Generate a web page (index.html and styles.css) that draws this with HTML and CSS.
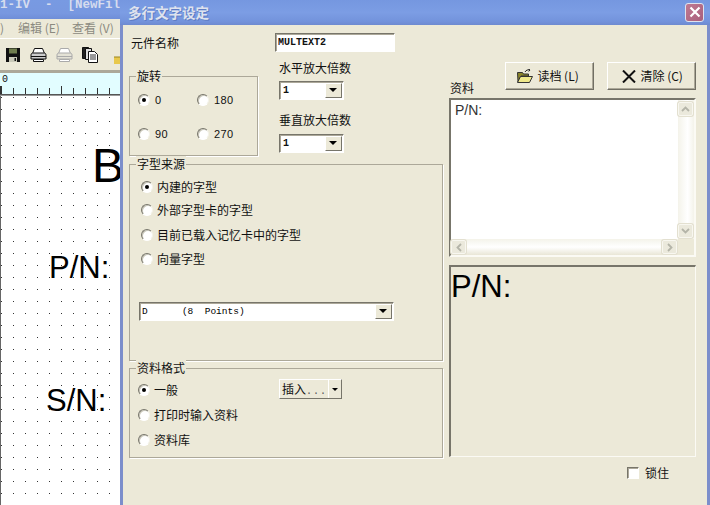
FILE: index.html
```html
<!DOCTYPE html>
<html lang="zh">
<head>
<meta charset="utf-8">
<title>多行文字设定</title>
<link rel="stylesheet" href="styles.css">
</head>
<body>
<div class="desktop">
  <div class="app">
    <div class="app-title">1-IV  -  [NewFil</div>
    <div class="app-menu"><span class="m1">)</span><span class="m2">编辑 (E)</span><span class="m3">查看 (V)</span></div>
    <div class="app-tools">
      <svg class="tool" width="16" height="16" viewBox="0 0 16 16"><path d="M1 1h14v14H1z" fill="#111"/><path d="M4 1.500h8v5H4z" fill="#6f7d4e"/><path d="M4 10h8v5H4z" fill="#c9c9b8"/><path d="M9.500 11h1.500v3H9.500z" fill="#111"/></svg>
      <svg class="tool" width="17" height="16" viewBox="0 0 17 16"><path d="M4.500 1.500h8l2 5h-12z" fill="#fff" stroke="#111"/><path d="M1 8c0-1.500 1-2 2-2h11c1 0 2 .5 2 2v4H1z" fill="#ccc" stroke="#111"/><path d="M1 9.500h15M3.500 12.500h10v2h-10z" fill="#fff" stroke="#111"/></svg>
      <svg class="tool" width="17" height="16" viewBox="0 0 17 16"><path d="M4.500 1.500h8l2 5h-12z" fill="#fff" stroke="#aaa"/><path d="M1 8c0-1.500 1-2 2-2h11c1 0 2 .5 2 2v4H1z" fill="#e4e2d6" stroke="#aaa"/><path d="M1 9.500h15M3.500 12.500h10v2h-10z" fill="#fff" stroke="#aaa"/></svg>
      <svg class="tool" width="16" height="16" viewBox="0 0 16 16"><path d="M.5.500h6l1 1v10h-7z" fill="#222" stroke="#111"/><path d="M3.500 1.500h6v11h-6z" fill="#ddd" stroke="#111"/><path d="M6.500 4.500h6l3 3v8h-9z" fill="#fff" stroke="#111"/><path d="M8 8h6M8 10h6M8 12h6" stroke="#333"/></svg>
      <svg class="tool-folder" width="12" height="8" viewBox="0 0 12 8"><path d="M0 1h12v7H0z" fill="#e8c84c"/><path d="M0 1h12" stroke="#9a8420"/><path d="M8 0h4v1H8z" fill="#333"/></svg>
    </div>
    <div class="ruler"><span class="ruler-zero">0</span></div>
    <div class="canvas">
      <span class="big-b">B</span>
      <span class="big-pn">P/N:</span>
      <span class="big-sn">S/N:</span>
    </div>
  </div>

  <section class="dialog">
    <header class="dlg-title">
      <h1>多行文字设定</h1>
      <button class="close" aria-label="关闭"><svg width="12" height="12" viewBox="0 0 12 12"><path d="M1.500 1.500l9 9M10.500 1.500l-9 9" stroke="#fff" stroke-width="2.200"/></svg></button>
    </header>
    <div class="dlg-body">
      <div class="col-left">
        <div class="name-row">
          <label class="name-label">元件名称</label>
          <div class="field name-field mono">MULTEXT2</div>
        </div>
        <div class="rot-row">
          <div class="group rot-group">
            <span class="legend">旋转</span>
            <div class="rot-grid">
              <div class="opt"><i class="radio on"></i><span>0</span></div>
              <div class="opt"><i class="radio"></i><span>180</span></div>
              <div class="opt"><i class="radio"></i><span>90</span></div>
              <div class="opt"><i class="radio"></i><span>270</span></div>
            </div>
          </div>
          <div class="scale-col">
            <label class="scale-label first">水平放大倍数</label>
            <div class="field combo small mono"><span class="combo-val">1</span><i class="arrow"></i></div>
            <label class="scale-label second">垂直放大倍数</label>
            <div class="field combo small mono"><span class="combo-val">1</span><i class="arrow"></i></div>
          </div>
        </div>
        <div class="group src-group">
          <span class="legend">字型来源</span>
          <div class="src-list">
            <div class="opt"><i class="radio on"></i><span>内建的字型</span></div>
            <div class="opt"><i class="radio"></i><span>外部字型卡的字型</span></div>
            <div class="opt"><i class="radio"></i><span>目前已载入记忆卡中的字型</span></div>
            <div class="opt"><i class="radio"></i><span>向量字型</span></div>
          </div>
          <div class="field combo wide mono"><span class="combo-val">D      (8  Points)</span><i class="arrow"></i></div>
        </div>
        <div class="group fmt-group">
          <span class="legend">资料格式</span>
          <div class="fmt-list">
            <div class="opt"><i class="radio on"></i><span>一般</span></div>
            <div class="opt"><i class="radio"></i><span>打印时输入资料</span></div>
            <div class="opt"><i class="radio"></i><span>资料库</span></div>
          </div>
          <div class="split"><span class="split-main">插入<span class="mono">...</span></span><span class="split-arrow"><i class="arrow-sm"></i></span></div>
        </div>
      </div>
      <div class="col-right">
        <div class="btn-row">
          <label class="data-label">资料</label>
          <button class="btn load">
            <svg width="16" height="14" viewBox="0 0 16 14"><path d="M.5 3.500h5l1 1.500h5v2H4l-3 6z" fill="#8a8428" stroke="#333"/><path d="M3.500 7.500h12l-3 6H.5z" fill="#efe88a" stroke="#333"/><path d="M8 3c1-2 3-2.500 5-2M13 1l-1.800-1M13 1l-1.300 1.500" fill="none" stroke="#222"/></svg>
            <span>读档 (L)</span>
          </button>
          <button class="btn clear">
            <svg width="14" height="13" viewBox="0 0 14 13"><path d="M1 .5l12 12M13 .5l-12 12" stroke="#111" stroke-width="2"/></svg>
            <span>清除 (C)</span>
          </button>
        </div>
        <div class="memo">
          <div class="memo-text">P/N:</div>
          <div class="vbar"><i class="sb-btn"><svg width="9" height="6" viewBox="0 0 9 6"><path d="M1 5l3.500-3.500L8 5" fill="none" stroke="#b4b4a8" stroke-width="1.800"/></svg></i><i class="sb-btn"><svg width="9" height="6" viewBox="0 0 9 6"><path d="M1 1l3.500 3.500L8 1" fill="none" stroke="#b4b4a8" stroke-width="1.800"/></svg></i></div>
          <div class="hbar"><i class="sb-btn"><svg width="6" height="9" viewBox="0 0 6 9"><path d="M5 1L1.500 4.500 5 8" fill="none" stroke="#b4b4a8" stroke-width="1.800"/></svg></i><i class="sb-btn"><svg width="6" height="9" viewBox="0 0 6 9"><path d="M1 1l3.500 3.500L1 8" fill="none" stroke="#b4b4a8" stroke-width="1.800"/></svg></i></div>
        </div>
        <div class="preview">P/N:</div>
        <div class="lock-row"><i class="check"></i><span>锁住</span></div>
      </div>
    </div>
  </section>
</div>
</body>
</html>
```

FILE: styles.css
```css
* { box-sizing: border-box; }
html, body { margin: 0; padding: 0; }
body {
  width: 710px;
  height: 505px;
  overflow: hidden;
  font: 12px/16px "Noto Sans CJK SC", "Liberation Sans", sans-serif;
  color: #111;
  background: #ece9d8;
}
.desktop { position: relative; width: 710px; height: 505px; overflow: hidden; }
i { display: block; font-style: normal; }
.mono { font-family: "Liberation Mono", "DejaVu Sans Mono", monospace; }

/* background application */
.app { width: 121px; height: 505px; display: flex; flex-direction: column; overflow: hidden; background: #ece9d8; }
.app-title {
  height: 19px; flex: none; white-space: pre; overflow: hidden;
  font: bold 12.500px/11px "Liberation Mono", monospace; color: #d6dcee;
  background: linear-gradient(#789ae2, #7898e0 70%, #6f8ed8);
}
.app-menu { height: 20px; flex: none; display: flex; align-items: center; padding-bottom: 2px; color: #8b8a80; border-bottom: 1px solid #fff; }
.app-menu span { white-space: nowrap; }
.m1 { width: 18px; }
.m2 { width: 54px; }
.app-tools { height: 34px; flex: none; display: flex; align-items: flex-start; padding: 8px 0 0 5px; border-bottom: 3px solid #aca899; }
.tool { flex: none; margin-right: 9px; }
.tool-folder { flex: none; margin: 9px 0 0 7px; }
.ruler {
  height: 23px; flex: none; position: relative; background-color: #e2fdff;
  background-image:
    linear-gradient(#555, #555),
    repeating-linear-gradient(90deg, #333 0 1px, transparent 1px 12px),
    repeating-linear-gradient(90deg, #333 0 1px, transparent 1px 60px);
  background-repeat: no-repeat, repeat-x, repeat-x;
  background-size: 100% 1px, 100% 6px, 100% 8px;
  background-position: 0 21px, 1px 15px, 1px 13px;
  border-bottom: 1px solid #999;
}
.ruler-zero { position: absolute; left: 2px; top: 1px; font: 10px/12px "Liberation Mono", monospace; color: #111; }
.canvas {
  flex: 1; position: relative; overflow: hidden; background-color: #fff;
  border-left: 1px solid #666;
  background-image: radial-gradient(circle at .5px .5px, #333 .7px, transparent .8px);
  background-size: 12px 12px;
  background-position: 0 1px;
}
.canvas span { position: absolute; font-family: "Liberation Sans", sans-serif; color: #000; white-space: nowrap; }
.big-b { left: 91px; top: 42px; font-size: 48px; line-height: 56px; }
.big-pn { left: 48px; top: 152px; font-size: 31px; line-height: 40px; }
.big-sn { left: 45px; top: 285px; font-size: 31px; line-height: 40px; }

/* dialog */
.dialog {
  position: absolute; left: 120px; top: 0; width: 590px; height: 505px;
  display: flex; flex-direction: column;
  border-left: 3px solid #7c8ecb; border-right: 3px solid #7c8ecb;
  background: #ece9d8;
}
.dlg-title {
  height: 25px; flex: none; display: flex; align-items: center; justify-content: space-between;
  margin: 0 -3px; padding: 0 6px 1px 8px;
  background: linear-gradient(#7597e0, #7c9de4 50%, #7393dc 85%, #6e8ad0);
}
.dlg-title h1 { margin: 0; font-size: 13.500px; font-weight: bold; line-height: 16px; color: #dfe3ee; text-shadow: 1px 1px 0 #5f7cc4; }
.close {
  width: 19px; height: 19px; padding: 0; display: flex; align-items: center; justify-content: center;
  border: 1px solid #dfe3ee; border-radius: 3px;
  background: linear-gradient(135deg, #bf7a92, #a95f7c);
}
.dlg-body { flex: 1; display: flex; padding: 0 0 0 6px; gap: 6px; }
.col-left { width: 314px; flex: none; display: flex; flex-direction: column; }
.col-right { width: 247px; flex: none; display: flex; flex-direction: column; }

.name-row { display: flex; align-items: center; margin-top: 8px; height: 19px; }
.name-label { width: 146px; padding-left: 2px; }

.field {
  background: #fff; border: 1px solid; border-color: #77756a #fff #fff #77756a;
  box-shadow: inset 1px 1px 0 #aca899;
  font-size: 10px; font-weight: bold; color: #111;
}
.name-field { width: 120px; height: 19px; line-height: 16px; padding: 1px 0 0 2px; }

.group { position: relative; border: 1px solid #aca899; box-shadow: 1px 1px 0 #fff; }
.legend { position: absolute; left: 6px; top: -9px; padding: 0 1px; background: #ece9d8; line-height: 16px; }

.opt { display: flex; align-items: center; height: 16px; white-space: nowrap; }
.radio {
  width: 12px; height: 12px; flex: none; border-radius: 50%; position: relative; background: #fff;
  border: 1px solid; border-color: #77756a #f4f3ea #fff #77756a;
  box-shadow: inset 1px 1px 0 #c8c6b8;
}
.radio.on::after { content: ""; position: absolute; left: 3px; top: 3px; width: 4px; height: 4px; border-radius: 50%; background: #000; }

.rot-row { display: flex; }
.rot-group { width: 129px; height: 80px; margin-top: 24px; flex: none; }
.rot-grid { display: grid; grid-template-columns: 59px 1fr; grid-auto-rows: 16px; row-gap: 18px; padding: 15px 0 0 8px; }
.rot-grid .opt { gap: 5px; font-family: "Liberation Sans", sans-serif; font-size: 11px; letter-spacing: .4px; }
.scale-col { margin-left: 21px; display: flex; flex-direction: column; align-items: flex-start; }
.scale-label { display: block; line-height: 16px; }
.scale-label.first { margin-top: 8px; margin-bottom: 5px; }
.scale-label.second { margin-top: 12px; margin-bottom: 6px; }

.combo { display: flex; align-items: center; justify-content: space-between; height: 19px; padding: 1px; line-height: 15px; }
.combo-val { padding-left: 2px; white-space: pre; }
.small { width: 65px; }
.arrow {
  width: 17px; height: 15px; flex: none; position: relative; background: #ece9d8;
  border: 1px solid; border-color: #fff #77756a #77756a #fff;
}
.arrow::after { content: ""; position: absolute; left: 3px; top: 4px; border: 4px solid transparent; border-top: 4px solid #000; border-bottom: 0; }

.src-group { height: 197px; margin-top: 8px; }
.src-list { display: grid; grid-template-rows: 23px 25px 24px 16px; padding: 14px 0 0 11px; }
.src-list .opt { gap: 4px; }
.wide { width: 255px; height: 19px; margin: 35px 0 0 9px; font-size: 9.500px; font-weight: normal; color: #000; }
.wide .combo-val { padding-left: 1px; }

.fmt-group { height: 90px; margin-top: 7px; display: flex; }
.fmt-list { width: 149px; flex: none; display: grid; grid-template-rows: 25px 25px 16px; padding: 13px 0 0 8px; }
.fmt-list .opt { gap: 4px; }
.split {
  display: flex; align-items: stretch; width: 63px; height: 20px; margin-top: 10px;
  background: #ece9d8; border: 1px solid; border-color: #fff #77756a #77756a #fff;
}
.split-main { flex: 1; padding: 0 0 0 2px; line-height: 17px; border-right: 1px solid #fff; white-space: nowrap; }
.split-main .mono { font-size: 10px; letter-spacing: 1px; color: #555; }
.split-arrow { width: 12px; flex: none; display: flex; align-items: center; justify-content: center; }
.arrow-sm { border: 3px solid transparent; border-top: 3px solid #000; border-bottom: 0; }

.btn-row { display: flex; margin-top: 37px; height: 28px; }
.data-label { width: 56px; padding-left: 1px; align-self: flex-end; margin-bottom: -6px; }
.btn {
  height: 28px; margin: 0; display: flex; align-items: center; justify-content: center; gap: 4px;
  background: #ece9d8; font: inherit; color: #111;
  border: 1px solid; border-color: #fff #716f64 #716f64 #fff;
  box-shadow: inset -1px -1px 0 #aca899;
}
.load { width: 90px; margin-right: 13px; padding: 0 3px 0 0; }
.clear { width: 89px; padding: 0 0 0 2px; }
.memo {
  height: 159px; margin-top: 8px; display: grid;
  grid-template-columns: 1fr 16px; grid-template-rows: 1fr 16px;
  background: #ece9d8; border: 2px solid; border-color: #77756a #fbfaf4 #fbfaf4 #77756a;
}
.memo-text { padding: 1px 0 0 4px; background: #fff; font: 14px/18px "Liberation Sans", sans-serif; color: #333; }
.vbar, .hbar { display: flex; justify-content: space-between; }
.vbar { flex-direction: column; padding: 2px 0 1px; background: linear-gradient(90deg, #f4f3ea, #fff 60%, #f4f3ea); }
.hbar { grid-row: 2; padding: 1px 1px 1px 0; background: linear-gradient(#f4f3ea, #fff 50%, #e9e6d6); }
.sb-btn {
  width: 15px; height: 14px; display: flex; align-items: center; justify-content: center;
  background: #ebe9dc; border: 1px solid #f8f7f0; border-radius: 2px; box-shadow: 0 0 0 1px #e3e0d0;
}
.preview {
  height: 192px; margin-top: 8px; padding: 1px 0 0 0;
  border: 2px solid; border-color: #77756a #fbfaf4 #fbfaf4 #77756a;
  border-right-width: 1px; border-bottom-width: 1px;
  font: 31px/38px "Liberation Sans", sans-serif; color: #000;
}
.lock-row { display: flex; align-items: center; gap: 6px; margin-top: 8px; padding-left: 178px; }
.check { width: 12px; height: 12px; background: #fff; border: 1px solid; border-color: #77756a #fff #fff #77756a; box-shadow: inset 1px 1px 0 #aca899; }
```
